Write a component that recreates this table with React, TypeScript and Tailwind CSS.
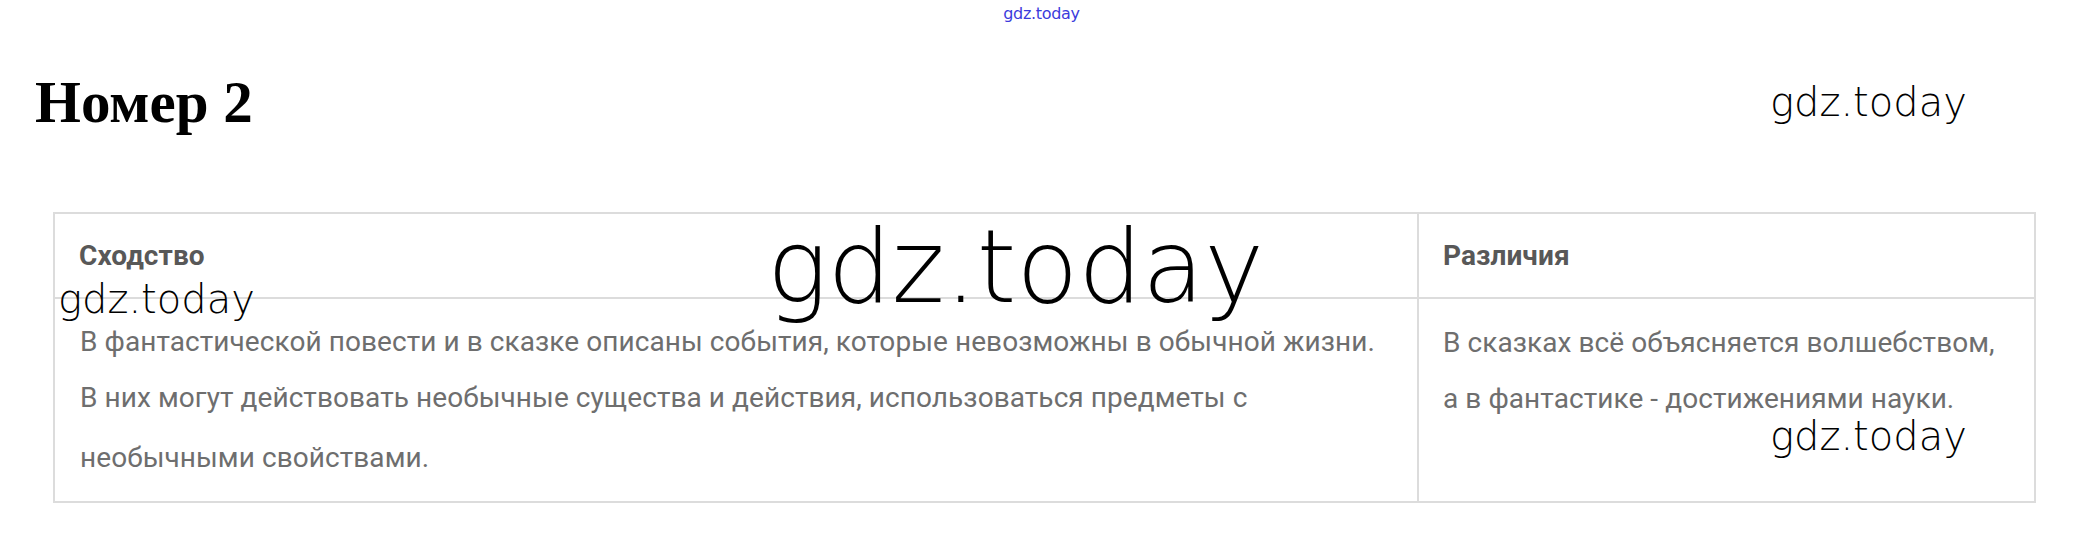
const mark = "font-['DejaVu_Sans',sans-serif] font-extralight leading-none text-black whitespace-nowrap";

const App = () => {
  return (
    <div className="relative w-[2083px] h-[542px] overflow-hidden bg-white">
      <div className="h-[24px] pt-[1px] text-center">
        <span className="font-['DejaVu_Sans',sans-serif] text-[16px] leading-none tracking-[-0.3px] text-[#3b3bdc]">
          gdz.today
        </span>
      </div>

      <h1 className="mt-[49px] pl-[35px] font-['Liberation_Serif',serif] text-[59px] font-bold leading-none text-black">
        Номер 2
      </h1>

      <div className="ml-[53px] mt-[80px] grid w-[1983px] grid-cols-[1364px_1fr] border-2 border-[#dcdcdc] font-['Roboto',sans-serif] text-[28px] leading-none tracking-[0.07px]">
        <div className="flex h-[85px] items-center border-b-2 border-r-2 border-[#dcdcdc] pl-[24px] font-bold text-[#585858]">
          Сходство
        </div>
        <div className="flex h-[85px] items-center border-b-2 border-[#dcdcdc] pl-[24px] font-bold text-[#585858]">
          Различия
        </div>
        <div className="h-[202px] border-r-2 border-[#dcdcdc] pl-[25px] pt-[29px] text-[#6e6e6e]">
          <p>В фантастической повести и в сказке описаны события, которые невозможны в обычной жизни.</p>
          <p className="mt-[28px]">В них могут действовать необычные существа и действия, использоваться предметы с</p>
          <p className="mt-[32px]">необычными свойствами.</p>
        </div>
        <div className="h-[202px] pl-[24px] pt-[30px] text-[#6e6e6e]">
          <p>В сказках всё объясняется волшебством,</p>
          <p className="mt-[28px]">а в фантастике - достижениями науки.</p>
        </div>
      </div>

      <span className={`${mark} absolute left-[767px] top-[217px] text-[101px]`}>gdz.today</span>
      <span className={`${mark} absolute left-[58px] top-[279px] text-[40px]`}>gdz.today</span>
      <span className={`${mark} absolute left-[1770px] top-[82px] text-[40px]`}>gdz.today</span>
      <span className={`${mark} absolute left-[1770px] top-[416px] text-[40px]`}>gdz.today</span>
    </div>
  );
};

export default App;
